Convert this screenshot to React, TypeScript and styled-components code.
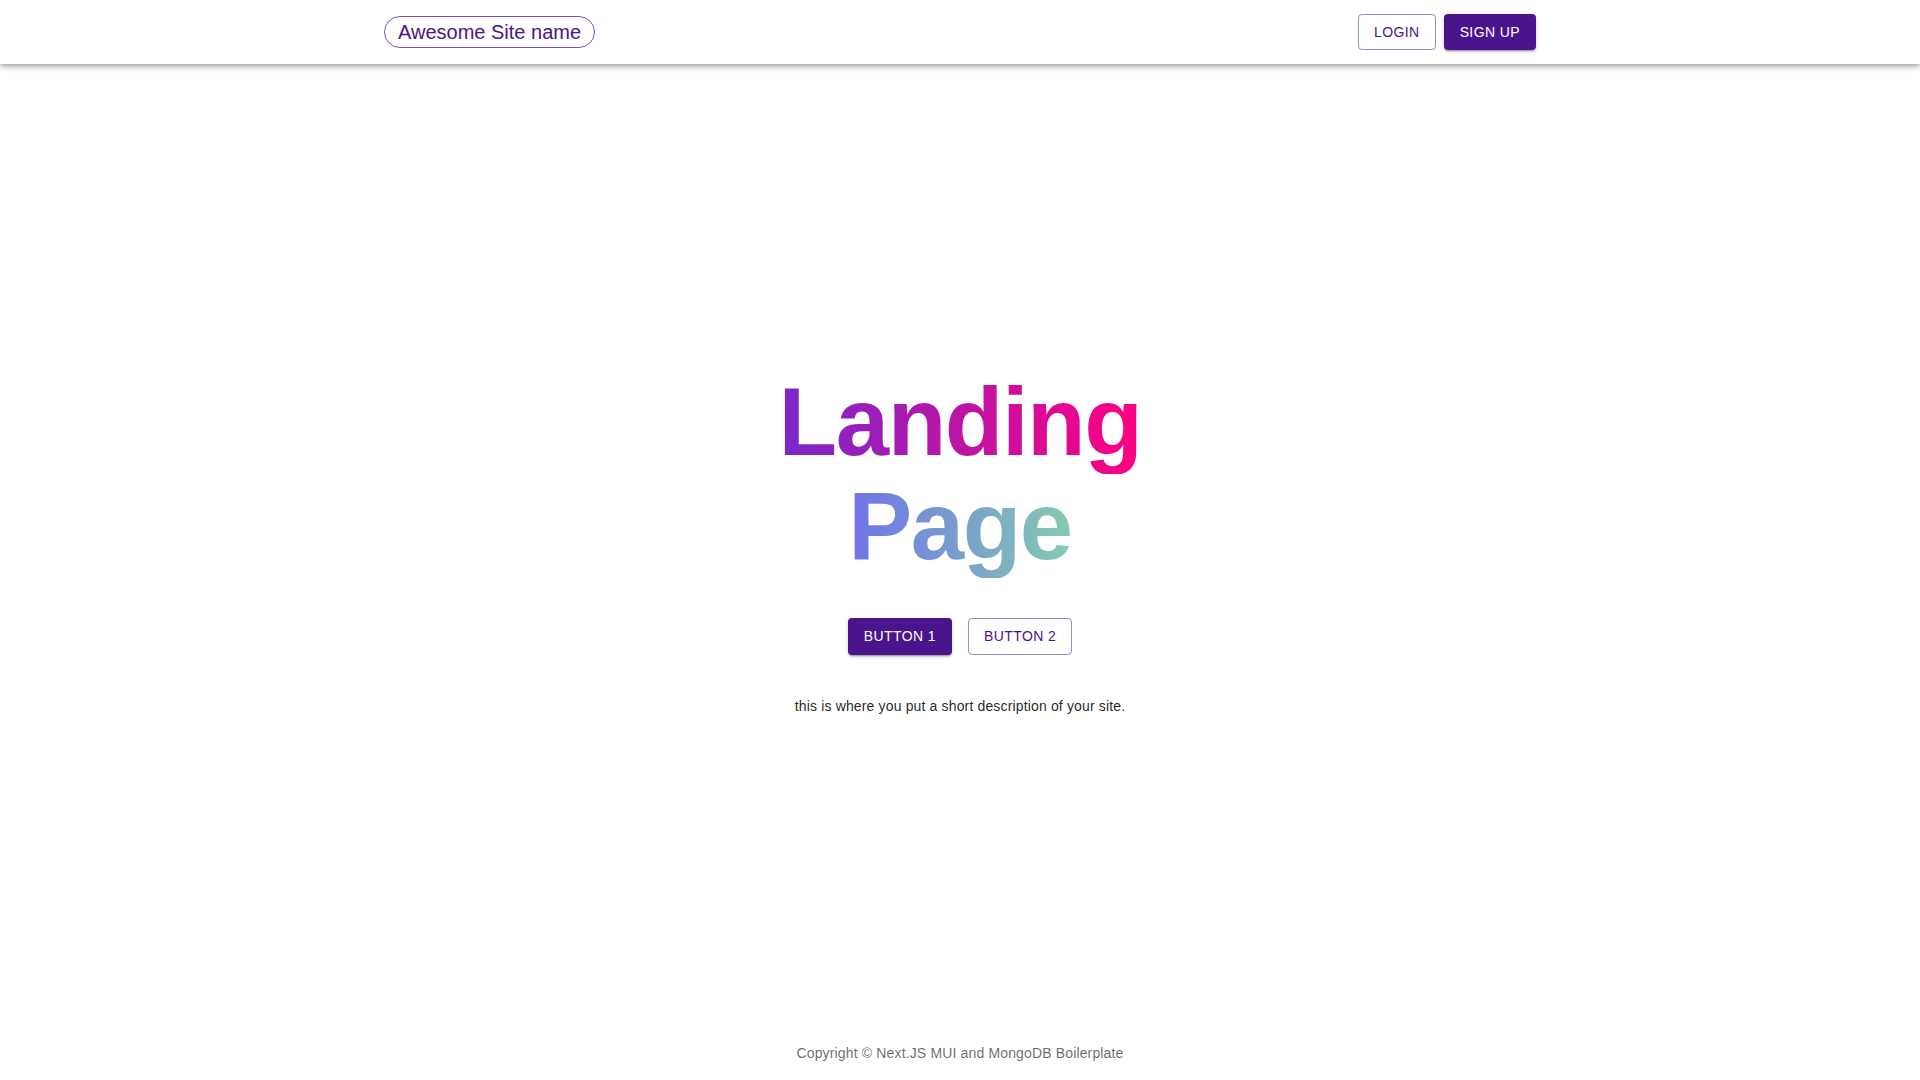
import React from "react";
import styled, { createGlobalStyle, css } from "styled-components";

const purple = "#4a148c";

const GlobalStyle = createGlobalStyle`
  html, body {
    margin: 0;
    padding: 0;
    background: #fff;
    font-family: "Liberation Sans", Arial, Helvetica, sans-serif;
  }
  * { box-sizing: border-box; }
`;

const Page = styled.div`
  min-height: 100vh;
  display: flex;
  flex-direction: column;
`;

const Header = styled.header`
  height: 64px;
  background: #fff;
  box-shadow: 0px 2px 4px -1px rgba(0, 0, 0, 0.2), 0px 4px 5px 0px rgba(0, 0, 0, 0.14),
    0px 1px 10px 0px rgba(0, 0, 0, 0.12);
  position: relative;
  z-index: 2;
`;

const HeaderInner = styled.div`
  max-width: 1200px;
  height: 100%;
  margin: 0 auto;
  padding: 0 24px;
  display: flex;
  align-items: center;
  justify-content: space-between;
`;

const Logo = styled.div`
  font-size: 20px;
  line-height: 30px;
  color: ${purple};
  border: 1px solid #7b52c0;
  border-radius: 16px;
  padding: 0 13px;
`;

const Actions = styled.div`
  display: flex;
  gap: 8px;
`;

const Button = styled.button<{ $variant: "contained" | "outlined" }>`
  font-family: "Liberation Sans", Arial, Helvetica, sans-serif;
  font-size: 14px;
  font-weight: 500;
  line-height: 24.5px;
  letter-spacing: 0.02857em;
  text-transform: uppercase;
  border-radius: 4px;
  min-width: 64px;
  cursor: pointer;
  ${(p) =>
    p.$variant === "contained"
      ? css`
          background: ${purple};
          color: #fff;
          border: none;
          padding: 6px 16px;
          box-shadow: 0px 3px 1px -2px rgba(0, 0, 0, 0.2), 0px 2px 2px 0px rgba(0, 0, 0, 0.14),
            0px 1px 5px 0px rgba(0, 0, 0, 0.12);
        `
      : css`
          background: transparent;
          color: ${purple};
          border: 1px solid rgba(74, 20, 140, 0.5);
          padding: 5px 15px;
        `}
`;

const Main = styled.main`
  flex: 1;
  display: flex;
  flex-direction: column;
  align-items: center;
  justify-content: center;
`;

const Title = styled.h1`
  margin: 0;
  display: flex;
  flex-direction: column;
  align-items: center;
  font-size: 96px;
  font-weight: 700;
  line-height: 104px;
  letter-spacing: -0.01562em;
`;

const GradientLine = styled.span<{ $from: string; $to: string }>`
  display: inline-block;
  background: linear-gradient(90deg, ${(p) => p.$from}, ${(p) => p.$to});
  -webkit-background-clip: text;
  background-clip: text;
  color: transparent;
`;

const ButtonRow = styled.div`
  display: flex;
  gap: 16px;
  margin-top: 40px;
`;

const Description = styled.p`
  margin: 41px 0 0;
  font-size: 14px;
  line-height: 20px;
  letter-spacing: 0.01071em;
  color: rgba(0, 0, 0, 0.87);
`;

const Footer = styled.footer`
  padding: 21px 0 17px;
  text-align: center;
  font-size: 14px;
  line-height: 20px;
  letter-spacing: 0.01071em;
  color: rgba(0, 0, 0, 0.6);
`;

export default function App() {
  return (
    <Page>
      <GlobalStyle />
      <Header>
        <HeaderInner>
          <Logo>Awesome Site name</Logo>
          <Actions>
            <Button $variant="outlined">Login</Button>
            <Button $variant="contained">Sign up</Button>
          </Actions>
        </HeaderInner>
      </Header>
      <Main>
        <Title>
          <GradientLine $from="#7928CA" $to="#FF0080">Landing</GradientLine>
          <GradientLine $from="#6f72ea" $to="#84ccae">Page</GradientLine>
        </Title>
        <ButtonRow>
          <Button $variant="contained">Button 1</Button>
          <Button $variant="outlined">Button 2</Button>
        </ButtonRow>
        <Description>this is where you put a short description of your site.</Description>
      </Main>
      <Footer>Copyright © Next.JS MUI and MongoDB Boilerplate</Footer>
    </Page>
  );
}
